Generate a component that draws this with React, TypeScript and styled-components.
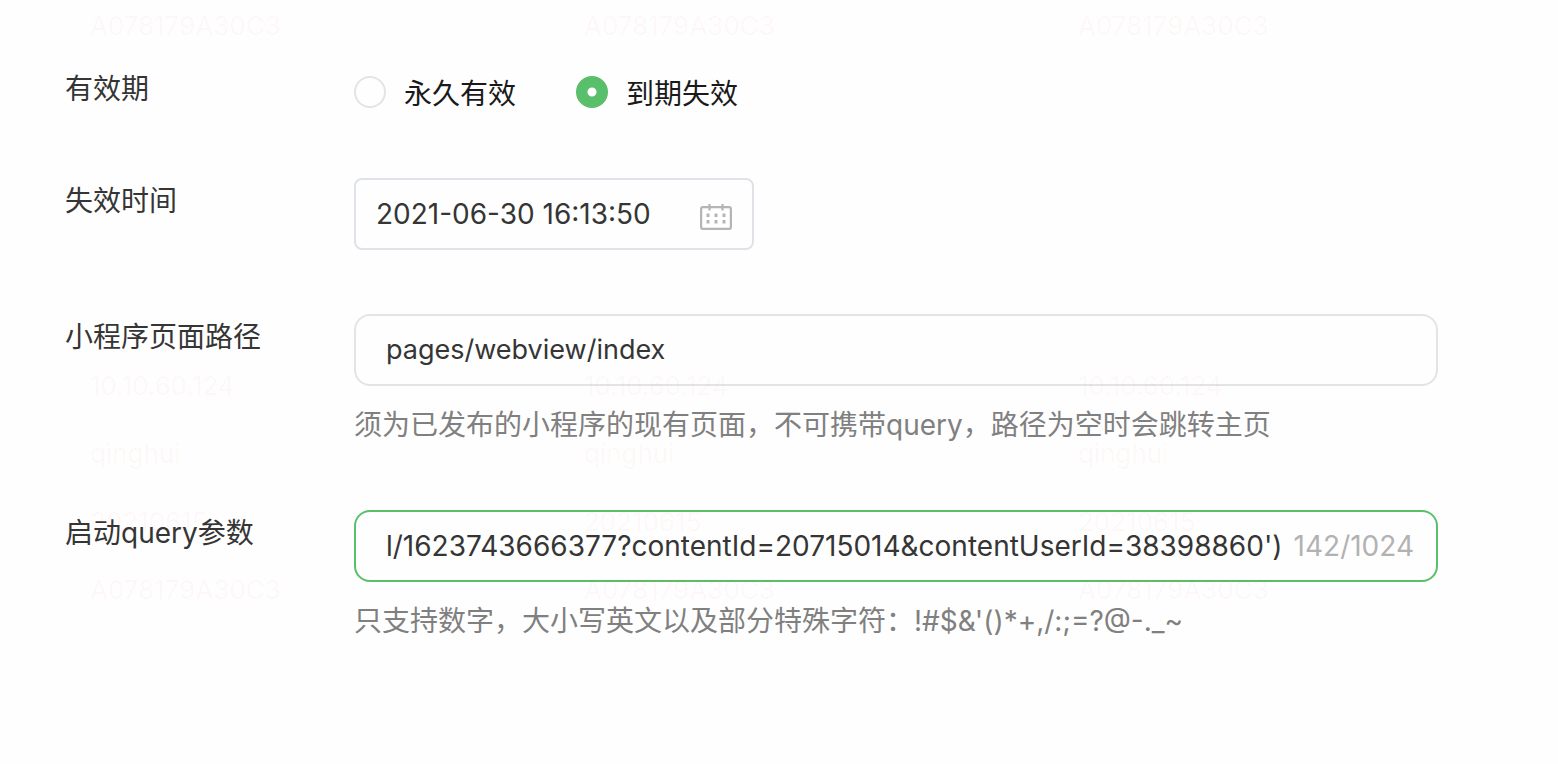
import React, { useState } from "react";
import styled, { createGlobalStyle, css } from "styled-components";

const GlobalStyle = createGlobalStyle`
  *, *::before, *::after { box-sizing: border-box; }
  body {
    margin: 0;
    background: #fefefe;
    color: #353535;
    font-family: Inter, "Noto Sans CJK SC", sans-serif;
    font-size: 28px;
    font-weight: 400;
    line-height: 40px;
  }
`;

const Page = styled.main`
  position: relative;
  min-height: 100vh;
  overflow: hidden;
`;

const Form = styled.form`
  display: flex;
  flex-direction: column;
  gap: 64px;
  padding: 66px 120px 64px 65px;
`;

const Row = styled.div`
  display: grid;
  grid-template-columns: 289px minmax(0, 1fr);
  align-items: start;
`;

const labelText = css`
  padding-top: 3px;
  color: #353535;
`;

const Label = styled.label`
  ${labelText}
`;

const GroupLabel = styled.span`
  ${labelText}
`;

const RadioGroup = styled.div`
  display: flex;
  gap: 60px;
  padding: 8px 0 0;
`;

const RadioLabel = styled.label`
  display: flex;
  align-items: flex-start;
  gap: 18px;
  color: #1a1a1a;
  cursor: pointer;
`;

const Radio = styled.input.attrs({ type: "radio" })`
  appearance: none;
  width: 32px;
  height: 32px;
  margin: 2px 0 0;
  border: 2px solid #e4e4e4;
  border-radius: 50%;
  background: #fefefe;

  &:checked {
    border-color: #5abf6b;
    background: radial-gradient(circle, #fff 4px, #5abf6b 5px);
  }
`;

const Field = styled.div`
  display: flex;
  flex-direction: column;
  gap: 19px;
  padding-bottom: 1px;
`;

const InputBox = styled.div<{ $active?: boolean; $date?: boolean }>`
  display: flex;
  align-items: center;
  width: ${({ $date }) => ($date ? "400px" : "100%")};
  max-width: 100%;
  height: 72px;
  padding: ${({ $date }) => ($date ? "0 20px" : "0 22px 0 30px")};
  border: 2px solid
    ${({ $active, $date }) => ($active ? "#5abf6b" : $date ? "#dfe2e6" : "#e4e4e4")};
  border-radius: ${({ $date }) => ($date ? "8px" : "16px")};
`;

const TextInput = styled.input<{ $compact?: boolean }>`
  flex: 1;
  min-width: 0;
  height: 40px;
  padding: 0;
  border: 0;
  outline: 0;
  background: transparent;
  color: #353535;
  font: inherit;
  font-size: ${({ $compact }) => ($compact ? "27px" : "28px")};
`;

const Counter = styled.span`
  margin-left: 8px;
  color: #b2b2b2;
`;

const Hint = styled.p`
  margin: 0;
  color: #808080;
`;

const CalendarButton = styled.button`
  display: flex;
  padding: 6px 0 0;
  border: 0;
  background: transparent;
  cursor: pointer;
`;

const Watermark = styled.div`
  position: absolute;
  top: -8px;
  left: 90px;
  display: grid;
  grid-template-columns: repeat(3, 494px);
  row-gap: 292px;
  color: rgba(255, 40, 40, 0.035);
  font-size: 26px;
  line-height: 68px;
  pointer-events: none;
  user-select: none;
`;

const Stamp = styled.div`
  display: flex;
  flex-direction: column;
`;

const deviceId = "A078179A30C3";
const stamps = [
  ...Array(3).fill([deviceId]),
  ...Array(3).fill(["10.10.60.124", "qinghui", "20210615", deviceId]),
] as string[][];

function CalendarIcon() {
  return (
    <svg width="32" height="28" viewBox="0 0 32 28" fill="none" aria-hidden="true">
      <rect x="1.100" y="4.100" width="29.800" height="21.800" rx="1.800" stroke="#b5b5b5" strokeWidth="2.200" />
      <path d="M9.500 1v6.500M22.500 1v6.500" stroke="#b5b5b5" strokeWidth="2.200" />
      <path
        d="M6.500 10.500h3v3.500h-3zM14.500 10.500h3v3.500h-3zM22.500 10.500h3v3.500h-3zM6.500 17h3v3.500h-3zM14.500 17h3v3.500h-3zM22.500 17h3v3.500h-3z"
        fill="#b5b5b5"
      />
    </svg>
  );
}

export default function App() {
  const [validity, setValidity] = useState("expires");
  const [expiry, setExpiry] = useState("2021-06-30 16:13:50");
  const [path, setPath] = useState("pages/webview/index");
  const [query, setQuery] = useState(
    "l/1623743666377?contentId=20715014&contentUserId=38398860')"
  );

  return (
    <>
      <GlobalStyle />
      <Page>
        <Form>
          <Row role="radiogroup" aria-labelledby="validity-label">
            <GroupLabel id="validity-label">有效期</GroupLabel>
            <RadioGroup>
              <RadioLabel>
                <Radio
                  name="validity"
                  checked={validity === "forever"}
                  onChange={() => setValidity("forever")}
                />
                永久有效
              </RadioLabel>
              <RadioLabel>
                <Radio
                  name="validity"
                  checked={validity === "expires"}
                  onChange={() => setValidity("expires")}
                />
                到期失效
              </RadioLabel>
            </RadioGroup>
          </Row>
          <Row>
            <Label htmlFor="expiry">失效时间</Label>
            <InputBox $date>
              <TextInput id="expiry" value={expiry} onChange={(e) => setExpiry(e.target.value)} />
              <CalendarButton type="button" aria-labelledby="expiry">
                <CalendarIcon />
              </CalendarButton>
            </InputBox>
          </Row>
          <Row>
            <Label htmlFor="path">小程序页面路径</Label>
            <Field>
              <InputBox>
                <TextInput
                  $compact
                  id="path"
                  aria-describedby="path-hint"
                  value={path}
                  onChange={(e) => setPath(e.target.value)}
                />
              </InputBox>
              <Hint id="path-hint">
                须为已发布的小程序的现有页面，不可携带query，路径为空时会跳转主页
              </Hint>
            </Field>
          </Row>
          <Row>
            <Label htmlFor="query">启动query参数</Label>
            <Field>
              <InputBox $active>
                <TextInput
                  id="query"
                  aria-describedby="query-hint"
                  value={query}
                  onChange={(e) => setQuery(e.target.value)}
                />
                <Counter>142/1024</Counter>
              </InputBox>
              <Hint id="query-hint">
                只支持数字，大小写英文以及部分特殊字符：!#$&amp;'()*+,/:;=?@-._~
              </Hint>
            </Field>
          </Row>
        </Form>
        <Watermark aria-hidden="true">
          {stamps.map((lines, n) => (
            <Stamp key={n}>
              {lines.map((line) => (
                <span key={line}>{line}</span>
              ))}
            </Stamp>
          ))}
        </Watermark>
      </Page>
    </>
  );
}
